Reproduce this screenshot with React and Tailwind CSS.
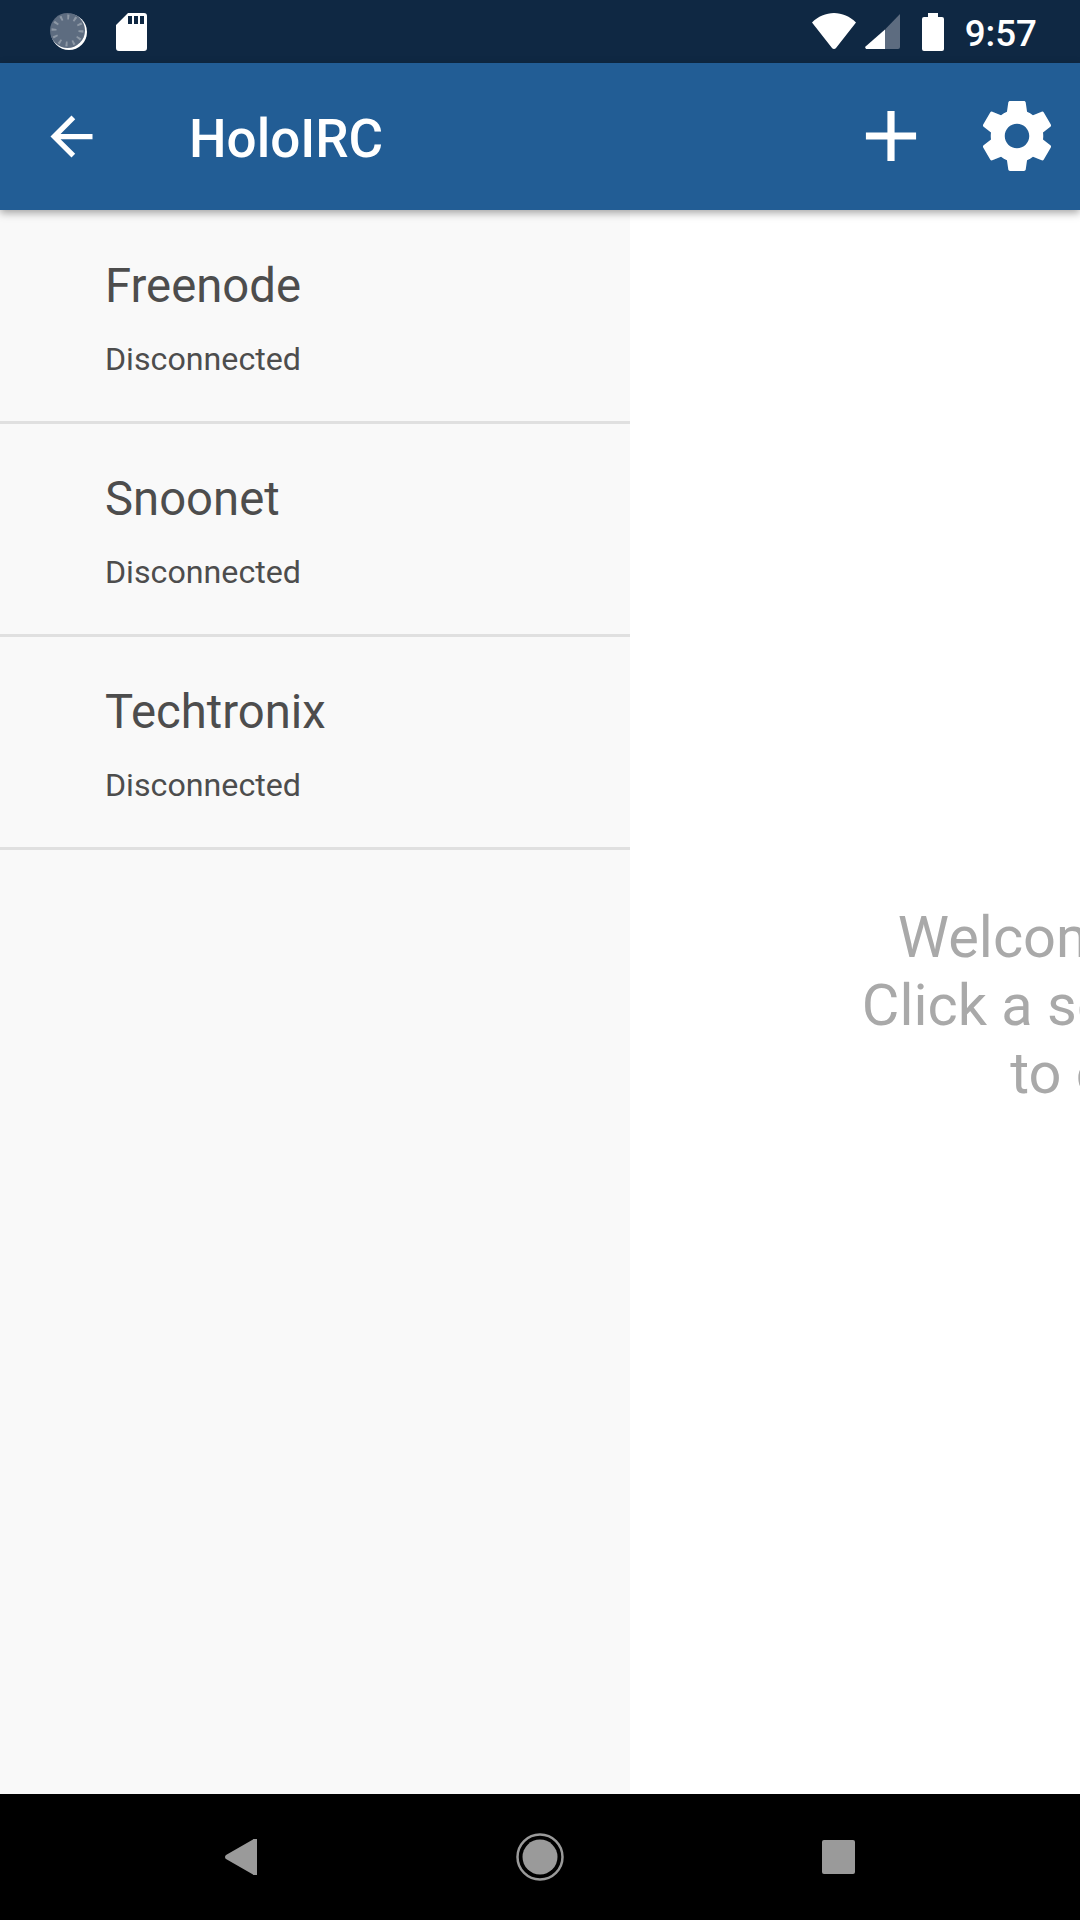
const servers = ['Freenode', 'Snoonet', 'Techtronix']

function StatusBar() {
  return (
    <div className="flex h-[63px] shrink-0 items-center justify-between bg-[#0f2843] pl-[50px] pr-[43px]">
      <div className="flex items-center gap-[29px]">
        <svg width="37" height="37" viewBox="0 0 37 37">
          <circle cx="19" cy="19" r="18" fill="#fff" />
          <circle cx="17.5" cy="17.5" r="17.5" fill="#5d6c80" />
          <circle cx="17.5" cy="17.5" r="13.5" fill="none" stroke="#8d98a5" strokeWidth="5" strokeDasharray="2 5" />
        </svg>
        <svg width="31" height="38" viewBox="0 0 31 38">
          <path
            d="M12 0H28a3 3 0 0 1 3 3V35a3 3 0 0 1-3 3H3a3 3 0 0 1-3-3V12ZM12 3V11H16V3ZM18 3V11H22V3ZM24 3V11H28V3Z"
            fill="#fff"
            fillRule="evenodd"
          />
        </svg>
      </div>
      <div className="flex items-center">
        <svg width="44" height="37" viewBox="0 0 44 37">
          <path d="M0 9.5C6 3.5 14 0 22 0S38 3.500 44 9.500L24 35a2.500 2.500 0 0 1-4 0Z" fill="#fff" />
        </svg>
        <svg className="ml-[9px]" width="35" height="35" viewBox="0 0 35 35">
          <path d="M20 15.500L35 0V33a2 2 0 0 1-2 2H20Z" fill="#5d6c80" />
          <path d="M20 15.500V35H1L0 33Z" fill="#fff" />
        </svg>
        <svg className="ml-[22px]" width="22" height="38" viewBox="0 0 22 38">
          <path d="M6 0H16V4H20a2 2 0 0 1 2 2V36a2 2 0 0 1-2 2H2a2 2 0 0 1-2-2V6a2 2 0 0 1 2-2H6Z" fill="#fff" />
        </svg>
        <span className="ml-[21px] mt-[6px] font-['Roboto',sans-serif] text-[36.75px] font-medium leading-none text-white">9:57</span>
      </div>
    </div>
  )
}

function AppBar() {
  return (
    <div className="relative z-10 flex h-[147px] shrink-0 items-center bg-[#225d95] pl-[40px] pr-[21px] shadow-[0_3px_8px_rgba(0,0,0,0.35)]">
      <svg width="63" height="63" viewBox="0 0 24 24" fill="#fff">
        <path d="M20 11H7.830l5.590-5.590L12 4l-8 8 8 8 1.410-1.410L7.830 13H20v-2z" />
      </svg>
      <div className="ml-[86px] mt-[6px] font-['Roboto',sans-serif] text-[53px] font-medium text-white">HoloIRC</div>
      <div className="ml-auto flex items-center gap-[41px] pb-[2px]">
        <svg width="86" height="86" viewBox="0 0 24 24" fill="#fff">
          <path d="M19 13h-6v6h-2v-6H5v-2h6V5h2v6h6v2z" />
        </svg>
        <svg width="84" height="84" viewBox="0 0 24 24" fill="#fff">
          <path d="M19.430 12.980c.04-.32.07-.64.07-.98s-.03-.66-.07-.98l2.110-1.650c.19-.15.24-.42.12-.64l-2-3.460c-.12-.22-.39-.3-.61-.22l-2.490 1c-.52-.4-1.080-.73-1.690-.98l-.38-2.650C14.460 2.180 14.250 2 14 2h-4c-.25 0-.46.18-.49.42l-.38 2.650c-.61.25-1.170.59-1.690.98l-2.490-1c-.23-.09-.49 0-.61.22l-2 3.460c-.13.22-.07.49.12.64l2.110 1.650c-.04.32-.07.65-.07.98s.03.66.07.98l-2.110 1.650c-.19.15-.24.42-.12.64l2 3.460c.12.22.39.3.61.22l2.490-1c.52.4 1.080.73 1.690.98l.38 2.650c.03.24.24.42.49.42h4c.25 0 .46-.18.49-.42l.38-2.650c.61-.25 1.170-.59 1.690-.98l2.490 1c.23.09.49 0 .61-.22l2-3.460c.12-.22.07-.49-.12-.64l-2.110-1.650zM12 15.500c-1.930 0-3.500-1.570-3.500-3.500s1.570-3.500 3.500-3.500 3.500 1.570 3.500 3.500-1.570 3.500-3.500 3.500z" />
        </svg>
      </div>
    </div>
  )
}

function ServerRow({ name }) {
  return (
    <div className="flex h-[213px] flex-col border-b-[3px] border-[#e0e0e0] pl-[105px] pt-[47px] font-['Roboto',sans-serif] text-[#4d4d4d]">
      <div className="text-[47.250px] leading-[56px]">{name}</div>
      <div className="mt-[25px] text-[32.200px] leading-[40px]">Disconnected</div>
    </div>
  )
}

function NavBar() {
  return (
    <div className="flex h-[126px] shrink-0 items-center justify-center gap-[214px] bg-black">
      <div className="flex w-[84px] justify-center">
        <svg className="mr-[2px]" width="32" height="36" viewBox="0 0 32 36" fill="#9a9a9a">
          <path d="M28 .5a2 2 0 0 1 4 1.500V34a2 2 0 0 1-4 1.500L1 20a2.500 2.500 0 0 1 0-4Z" />
        </svg>
      </div>
      <div className="flex w-[84px] justify-center">
        <svg width="48" height="48" viewBox="0 0 48 48">
          <circle cx="24" cy="24" r="22.500" fill="none" stroke="#9a9a9a" strokeWidth="2.500" />
          <circle cx="24" cy="24" r="17.500" fill="#9a9a9a" />
        </svg>
      </div>
      <div className="flex w-[84px] justify-center">
        <div className="h-[34px] w-[33px] rounded-[2px] bg-[#9a9a9a]"></div>
      </div>
    </div>
  )
}

export default function App() {
  return (
    <div className="flex h-[1920px] w-[1080px] flex-col overflow-hidden bg-white">
      <StatusBar />
      <AppBar />
      <div className="flex min-h-0 flex-1">
        <div className="w-[630px] shrink-0 bg-[#f9f9f9] pt-px">
          {servers.map((s) => (
            <ServerRow key={s} name={s} />
          ))}
        </div>
        <div className="flex w-[1080px] shrink-0 items-center justify-center pt-[6px] text-center font-['Roboto',sans-serif] text-[57.750px] leading-[68px] text-[#a9a9a9]">
          <div>
            Welcome to HoloIRC!
            <br />
            Click a server on the left
            <br />
            to connect it
          </div>
        </div>
      </div>
      <NavBar />
    </div>
  )
}
